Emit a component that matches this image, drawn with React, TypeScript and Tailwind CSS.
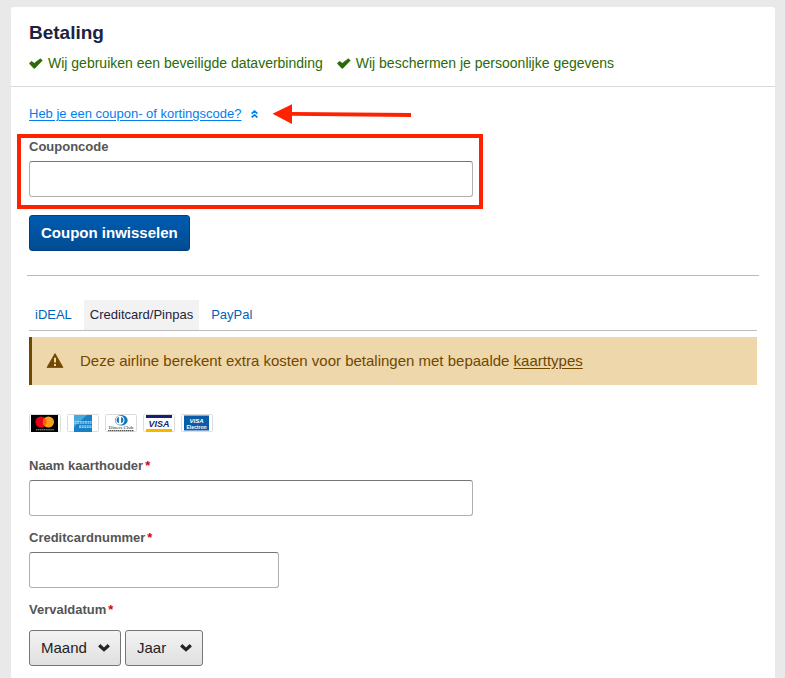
import { useState } from "react";
import type { ReactNode } from "react";

const MONTHS = ["01", "02", "03", "04", "05", "06", "07", "08", "09", "10", "11", "12"];
const YEARS = ["2019", "2020", "2021", "2022", "2023", "2024", "2025"];

const inputClass =
  "block h-9 max-w-full rounded-[3px] border border-[#b0b0b0] border-t-[#767676] bg-white px-3 text-[15px] text-[#222]";

function CheckIcon() {
  return (
    <svg viewBox="0 0 14 11" className="h-[11px] w-[14px] shrink-0" fill="#2b6a06" aria-hidden="true">
      <path d="M0.3 5.4 2.4 3.3 5.3 5.3 11.3 0.7 13.3 2.4 5.8 10.3 4.8 10.3Z" stroke="#2b6a06" strokeWidth="0.6" strokeLinejoin="round" />
    </svg>
  );
}

function DoubleChevronUp() {
  return (
    <svg viewBox="0 0 7 8" className="h-2 w-[7px]" fill="none" stroke="#0080f0" strokeWidth="1.7" aria-hidden="true">
      <path d="M0.6 3.7 3.5 1.1 6.4 3.7M0.6 7.5 3.5 4.9 6.4 7.5" />
    </svg>
  );
}

function WarningIcon() {
  return (
    <svg viewBox="0 0 18 16" className="h-4 w-[18px] shrink-0" aria-hidden="true">
      <path d="M9 0.6 17 14.4H1Z" fill="#704800" stroke="#704800" strokeWidth="0.8" strokeLinejoin="round" />
      <path d="M8 4.8h2v4.8H8zM8 11h2v2H8z" fill="#eed7ab" />
    </svg>
  );
}

// Rode pijl naar de couponlink
function RedArrow() {
  return (
    <svg viewBox="0 0 140 20" className="h-5 w-[140px] shrink-0" fill="#ff2200" aria-hidden="true">
      <path d="M0.5 9.8 20 0.2V8L139 9v4L20 11.8V20Z" />
    </svg>
  );
}

function Card({ label, children }: { label: string; children: ReactNode }) {
  return (
    <li>
      <svg viewBox="0 0 32 18" className="block h-[18px] w-8" role="img" aria-label={label}>
        <rect x="0.5" y="0.5" width="31" height="17" rx="1" fill="#fff" stroke="#dcdcdc" />
        {children}
      </svg>
    </li>
  );
}

function PaymentCards() {
  return (
    <ul className="flex gap-1.5">
      <Card label="Mastercard">
        <rect x="2" y="1" width="27" height="17" fill="#000" />
        <circle cx="12" cy="8" r="5.6" fill="#eb001b" />
        <circle cx="19.4" cy="8" r="5.6" fill="#f79e1b" />
        <path d="M15.7 3.8a5.6 5.6 0 0 1 0 8.4 5.6 5.6 0 0 1 0-8.4z" fill="#ff5f00" />
        <path d="M7 15.8h18" stroke="#aaa" strokeWidth="1" strokeDasharray="1.4 0.5" />
      </Card>
      <Card label="American Express">
        <rect x="7" y="1" width="18" height="17" fill="#1681c4" />
        <path d="M7 1h13L7 13z" fill="#4aa8da" />
        <path d="M7.5 8.4h17M12 12.6h12.5" stroke="#d8effa" strokeWidth="2.4" strokeDasharray="2 0.6" />
        <path d="M7.5 8.4h17M12 12.6h12.5" stroke="#1681c4" strokeWidth="0.6" />
      </Card>
      <Card label="Diners Club">
        <ellipse cx="16.3" cy="6.2" rx="6.3" ry="5.2" fill="#1474b8" />
        <circle cx="15" cy="6.2" r="4.5" fill="#fff" />
        <path d="M13.9 3.1v6.2a3.2 3.2 0 0 1 0-6.2zM16.1 3.1v6.2a3.2 3.2 0 0 0 0-6.2z" fill="#1474b8" />
        <text x="16" y="14.8" textAnchor="middle" fontSize="5" fontFamily="Liberation Serif" fill="#222">
          Diners Club
        </text>
        <path d="M3 16.7h26" stroke="#555" strokeWidth="1.2" strokeDasharray="1.5 0.5" />
      </Card>
      <Card label="Visa">
        <rect x="3" y="1" width="26" height="3" fill="#1a1f71" />
        <rect x="3" y="15" width="26" height="3" fill="#f7b600" />
        <text x="16" y="13" textAnchor="middle" fontSize="9" fontWeight="bold" fontStyle="italic" fill="#1a1f71">
          VISA
        </text>
      </Card>
      <Card label="Visa Electron">
        <rect x="3" y="1.5" width="25" height="15" fill="#0a5ba8" />
        <text x="15.5" y="8.5" textAnchor="middle" fontSize="6" fontWeight="bold" fontStyle="italic" fill="#fff">
          VISA
        </text>
        <text x="15.5" y="15" textAnchor="middle" fontSize="5" fontWeight="bold" fill="#fff">
          Electron
        </text>
      </Card>
    </ul>
  );
}

function FieldLabel({ htmlFor, children, required }: { htmlFor: string; children: ReactNode; required?: boolean }) {
  return (
    <label htmlFor={htmlFor} className="block text-[13px] leading-5 font-bold text-[#555]">
      {children}
      {required && <span className="ml-0.5 text-[#d9000d]">*</span>}
    </label>
  );
}

interface DropdownProps {
  id: string;
  label: string;
  placeholder: string;
  options: string[];
  className: string;
}

function Dropdown({ id, label, placeholder, options, className }: DropdownProps) {
  return (
    <div className={`relative h-9 ${className}`}>
      <select
        id={id}
        aria-label={label}
        defaultValue=""
        className="h-full w-full appearance-none rounded-[3px] border border-[#767676] bg-linear-to-b from-[#f3f3f3] to-[#e0e0e0] pl-[11px] text-[15px] text-[#222]"
      >
        <option value="">{placeholder}</option>
        {options.map((option) => (
          <option key={option} value={option}>
            {option}
          </option>
        ))}
      </select>
      <svg
        viewBox="0 0 12 8"
        className="pointer-events-none absolute top-[14px] right-[11px] h-2 w-3"
        fill="none"
        stroke="#222"
        strokeWidth="3.2"
        aria-hidden="true"
      >
        <path d="M1.2 1.3 6 5.7 10.8 1.3" />
      </svg>
    </div>
  );
}

const tabs = ["iDEAL", "Creditcard/Pinpas", "PayPal"];

export default function App() {
  const [couponOpen, setCouponOpen] = useState(true);
  const [activeTab, setActiveTab] = useState("Creditcard/Pinpas");

  return (
    <div className="min-h-screen bg-[#e9e9e9] pt-[7px] pr-2.5 pl-[11px] font-['Liberation_Sans',Arial,sans-serif]">
      <main className="min-h-screen rounded-t-[3px] bg-white">
        <header className="border-b border-[#dadada] px-[18px] pt-3.5 pb-[13px]">
          <h1 className="text-[19px] leading-6 font-bold text-[#1c2340]">Betaling</h1>
          <ul className="mt-2 flex flex-wrap gap-x-3.5 text-[14px] leading-5 text-[#2b6a06]">
            <li className="flex items-center gap-[5px]">
              <CheckIcon />
              Wij gebruiken een beveiligde dataverbinding
            </li>
            <li className="flex items-center gap-[5px]">
              <CheckIcon />
              Wij beschermen je persoonlijke gegevens
            </li>
          </ul>
        </header>

        {/* Coupon */}
        <section className="mx-4 border-b border-[#bcbcbc] px-0.5 pt-[17px] pb-6">
          <div className="flex items-center">
            <a
              href="#coupon"
              className="text-[13px] leading-5 text-[#0080f0] underline underline-offset-2"
              onClick={(e) => {
                e.preventDefault();
                setCouponOpen(!couponOpen);
              }}
            >
              Heb je een coupon- of kortingscode?
            </a>
            <span className="mr-3.5 ml-2.5">
              <DoubleChevronUp />
            </span>
            <RedArrow />
          </div>
          {couponOpen && (
            <div id="coupon">
              <div className="relative mt-[13px] w-[444px] max-w-full">
                <FieldLabel htmlFor="couponcode">Couponcode</FieldLabel>
                <input id="couponcode" type="text" className={`mt-1 w-full ${inputClass}`} />
                <div className="pointer-events-none absolute -top-[3px] -right-2.5 -bottom-3 -left-3 border-4 border-[#ff2200]" />
              </div>
              <button
                type="button"
                className="mt-[18px] h-9 rounded-[3px] border border-[#00427f] bg-linear-to-b from-[#005bb0] to-[#004c93] px-[11px] text-[15px] font-bold text-white"
              >
                Coupon inwisselen
              </button>
            </div>
          )}
        </section>

        {/* Betaalmethode */}
        <section className="px-[18px] pt-6 pb-3">
          <div role="tablist" className="flex gap-1.5 border-b border-[#bcbcbc] text-[13px]">
            {tabs.map((tab) => (
              <button
                key={tab}
                type="button"
                role="tab"
                aria-selected={tab === activeTab}
                onClick={() => setActiveTab(tab)}
                className={`h-[30px] px-1.5 ${tab === activeTab ? "bg-[#f2f2f2] text-[#1c2340]" : "text-[#0062b8]"}`}
              >
                {tab}
              </button>
            ))}
          </div>

          <div className="mt-1.5 flex min-h-12 items-center gap-4 border-l-[3px] border-[#704800] bg-[#eed7ab] px-3.5 text-[15px] leading-5 text-[#704800]">
            <WarningIcon />
            <p>
              Deze airline berekent extra kosten voor betalingen met bepaalde{" "}
              <a href="#kaarttypes" className="underline underline-offset-2">
                kaarttypes
              </a>
            </p>
          </div>

          <form className="mt-[29px]">
            <PaymentCards />
            <div className="mt-6">
              <FieldLabel htmlFor="naam" required>
                Naam kaarthouder
              </FieldLabel>
              <input id="naam" type="text" className={`mt-1 w-[444px] ${inputClass}`} />
            </div>
            <div className="mt-3">
              <FieldLabel htmlFor="nummer" required>
                Creditcardnummer
              </FieldLabel>
              <input id="nummer" type="text" className={`mt-1 w-[250px] ${inputClass}`} />
            </div>
            <div className="mt-3">
              <FieldLabel htmlFor="maand" required>
                Vervaldatum
              </FieldLabel>
              <div className="mt-2.5 flex gap-1">
                <Dropdown id="maand" label="Maand" placeholder="Maand" options={MONTHS} className="w-[92px]" />
                <Dropdown id="jaar" label="Jaar" placeholder="Jaar" options={YEARS} className="w-[78px]" />
              </div>
            </div>
          </form>
        </section>
      </main>
    </div>
  );
}
